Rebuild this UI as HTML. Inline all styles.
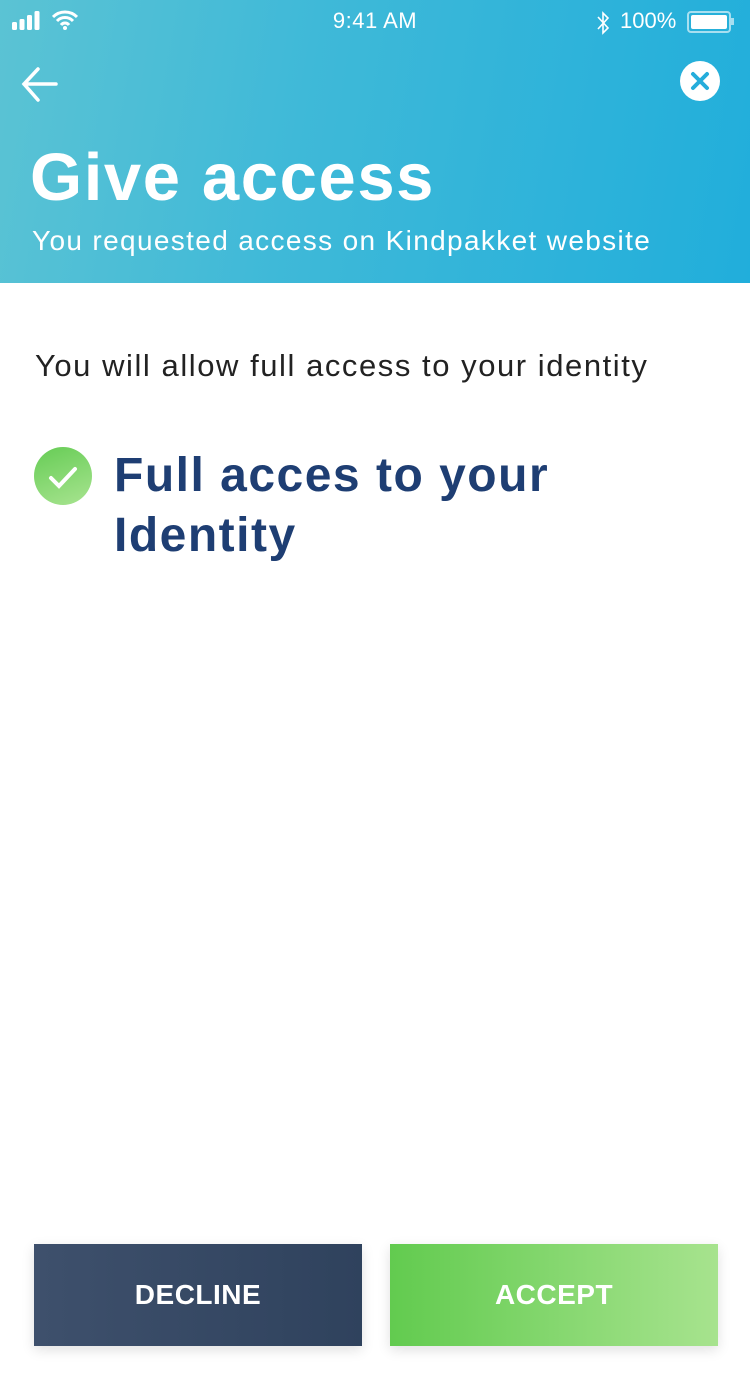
<!DOCTYPE html>
<html><head><style>
body{margin:0;width:750px;height:1380px;background:#fff;font-family:"Liberation Sans",sans-serif;position:relative;overflow:hidden}
.hdr{position:absolute;left:0;top:0;width:750px;height:283px;background:linear-gradient(100deg,#5bc3d4 0%,#3fb9d8 40%,#21aedb 100%)}
.t{position:absolute;color:#fff;white-space:nowrap}
.btn{position:absolute;top:1244px;width:328px;height:102px;color:#fff;font-weight:bold;font-size:28px;letter-spacing:0.5px;display:flex;align-items:center;justify-content:center;box-shadow:0 4px 12px rgba(0,0,0,.12)}
</style></head><body>
<div class="hdr">
<svg style="position:absolute;left:12px;top:11px" width="36" height="20"><rect x="0" y="11" width="5" height="8" rx="1.5" fill="#fff"/><rect x="7.5" y="8" width="5" height="11" rx="1.5" fill="#fff"/><rect x="15" y="4" width="5" height="15" rx="1.5" fill="#fff"/><rect x="22.5" y="0" width="5" height="19" rx="1.5" fill="#fff"/></svg>
<svg style="position:absolute;left:52px;top:10px" width="26" height="20" viewBox="0 0 26 20"><path d="M1 7a17 17 0 0 1 24 0M5 11a11 11 0 0 1 16 0M9 15a5 5 0 0 1 8 0" stroke="#fff" stroke-width="3" fill="none"/><circle cx="13" cy="18" r="2" fill="#fff"/></svg>
<div class="t" style="left:0;width:750px;text-align:center;top:8px;font-size:22px;letter-spacing:0.5px">9:41 AM</div>
<svg style="position:absolute;left:596px;top:11px" width="14" height="24" viewBox="0 0 14 24"><path d="M2 6l10 11-5 5V2l5 5L2 18" stroke="#fff" stroke-width="1.6" fill="none"/></svg>
<div class="t" style="left:620px;top:8px;font-size:22px">100%</div>
<div style="position:absolute;left:687px;top:11px;width:40px;height:18px;border:2px solid rgba(255,255,255,.6);border-radius:4px"><div style="margin:2px;height:14px;background:#fff;border-radius:2px"></div></div>
<div style="position:absolute;left:731px;top:18px;width:3px;height:7px;background:rgba(255,255,255,.6)"></div>
<svg style="position:absolute;left:20px;top:66px" width="40" height="38" viewBox="0 0 40 38"><path d="M36 18H4M18 3L4 18l14 16" stroke="#fff" stroke-width="3.5" fill="none" stroke-linecap="round"/></svg>
<div style="position:absolute;left:680px;top:61px;width:40px;height:40px;border-radius:50%;background:#fff"></div>
<svg style="position:absolute;left:680px;top:61px" width="40" height="40"><path d="M13 13l14 14M27 13L13 27" stroke="#25addb" stroke-width="4" stroke-linecap="round"/></svg>
<div class="t" style="left:30px;top:139px;font-size:67px;font-weight:bold;letter-spacing:1.6px">Give access</div>
<div class="t" style="left:32px;top:225px;font-size:28px;letter-spacing:1.35px">You requested access on Kindpakket website</div>
</div>
<div style="position:absolute;left:35px;top:348px;font-size:31px;color:#222;letter-spacing:1.55px;white-space:nowrap">You will allow full access to your identity</div>
<div style="position:absolute;left:34px;top:447px;width:58px;height:58px;border-radius:50%;background:linear-gradient(160deg,#66cc55,#a8e490)"></div>
<svg style="position:absolute;left:34px;top:447px" width="58" height="58"><path d="M17 31l8 8 16-17" stroke="#fff" stroke-width="4" fill="none" stroke-linecap="round"/></svg>
<div style="position:absolute;left:114px;top:446px;font-size:48px;font-weight:bold;color:#1e3e73;line-height:60px;letter-spacing:1.5px;white-space:nowrap">Full acces to your<br>Identity</div>
<div class="btn" style="left:34px;background:linear-gradient(90deg,#3e506c,#2f425d)">DECLINE</div>
<div class="btn" style="left:390px;background:linear-gradient(90deg,#62cb4f,#a7e38e)">ACCEPT</div>
</body></html>
